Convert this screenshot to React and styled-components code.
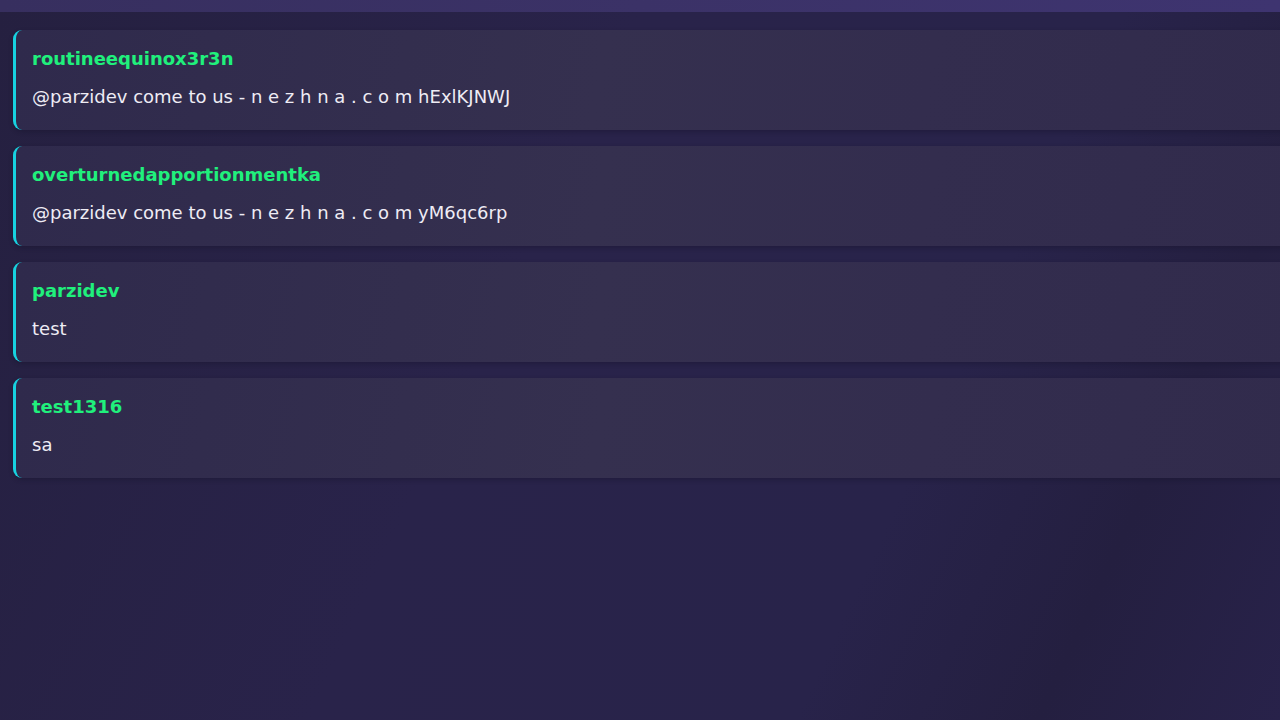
import styled, { createGlobalStyle } from "styled-components";

const GlobalStyle = createGlobalStyle`
  html, body {
    margin: 0;
    padding: 0;
    height: 100%;
    overflow: hidden;
  }
  body {
    background: #272243;
    font-family: "DejaVu Sans", Verdana, sans-serif;
  }
`;

const Page = styled.div`
  width: 1280px;
  height: 720px;
  overflow: hidden;
  background: linear-gradient(115deg, #252040 0%, #29234a 40%, #28234a 70%, #241f40 85%, #28224a 100%);
`;

const TopBar = styled.div`
  height: 12px;
  background: linear-gradient(90deg, #372f5f 0%, #3b3267 50%, #3e3470 100%);
`;

const Feed = styled.div`
  display: flex;
  flex-direction: column;
  gap: 16px;
  padding: 18px 0 0 13px;
  width: 1300px;
`;

const Card = styled.div`
  height: 100px;
  box-sizing: border-box;
  padding: 17px 0 0 16px;
  border-left: 3px solid #17d2e0;
  border-radius: 9px 0 0 9px;
  background: linear-gradient(100deg, #2f2a4c 0%, #35304f 45%, #332d4e 70%, #312b4c 100%);
  box-shadow: 0 2px 4px rgba(20, 16, 40, 0.35);
`;

const Name = styled.div`
  font-size: 18px;
  line-height: 24px;
  font-weight: 700;
  color: #20f07c;
  margin-bottom: 14px;
`;

const Message = styled.div`
  font-size: 18px;
  line-height: 24px;
  color: #eeecf4;
  white-space: pre;
`;

const messages = [
  { user: "routineequinox3r3n", text: "@parzidev come to us - n e z h n a . c o m hExlKJNWJ" },
  { user: "overturnedapportionmentka", text: "@parzidev come to us - n e z h n a . c o m yM6qc6rp" },
  { user: "parzidev", text: "test" },
  { user: "test1316", text: "sa" },
];

export default function App() {
  return (
    <>
      <GlobalStyle />
      <Page>
        <TopBar />
        <Feed>
          {messages.map((m) => (
            <Card key={m.user}>
              <Name>{m.user}</Name>
              <Message>{m.text}</Message>
            </Card>
          ))}
        </Feed>
      </Page>
    </>
  );
}
